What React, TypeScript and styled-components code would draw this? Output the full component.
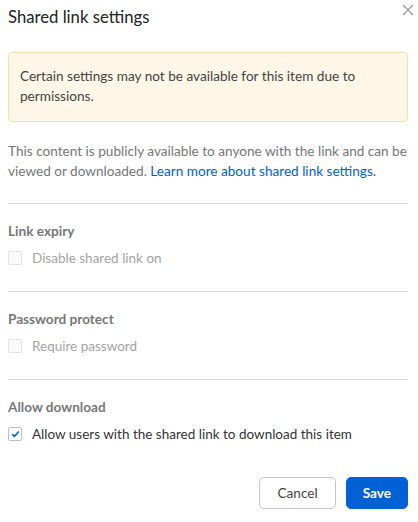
import React from 'react';
import styled, { createGlobalStyle } from 'styled-components';

const GlobalStyle = createGlobalStyle`
  html, body {
    margin: 0;
    padding: 0;
    background: #fff;
  }
  body {
    font-family: Lato, "Liberation Sans", sans-serif;
    -webkit-font-smoothing: antialiased;
  }
`;

const Modal = styled.div`
  width: 418px;
  height: 522px;
  box-sizing: border-box;
  padding: 7px 10px 0 8px;
  position: relative;
`;

const Title = styled.h2`
  margin: 0;
  font-size: 16.7px;
  line-height: 20px;
  font-weight: 400;
  color: #222;
`;

const CloseButton = styled.button`
  position: absolute;
  top: 3px;
  right: 4px;
  width: 13px;
  height: 13px;
  padding: 0;
  border: 0;
  background: none;
  display: flex;
  align-items: center;
  justify-content: center;
  cursor: pointer;
`;

const Notice = styled.div`
  margin-top: 25px;
  padding: 13px 11px 15px;
  background: #fef7e7;
  border: 1px solid #f7e0a3;
  border-radius: 4px;
  font-size: 13.6px;
  line-height: 20px;
  color: #444;
`;

const Description = styled.p`
  margin: 19px 0 0;
  font-size: 13.6px;
  line-height: 20px;
  color: #767676;
  padding-bottom: 22px;
`;

const LearnMore = styled.a`
  color: #0061d5;
  text-decoration: none;
`;

const Section = styled.section<{ $last?: boolean }>`
  border-top: 1px solid #d9d9d9;
  padding: 17px 0 ${(p) => (p.$last ? '33px' : '23px')};
`;

const SectionLabel = styled.div`
  font-size: 13.6px;
  line-height: 20px;
  font-weight: 700;
  color: #777;
`;

const CheckRow = styled.label<{ $disabled?: boolean }>`
  margin-top: 7px;
  display: flex;
  align-items: center;
  gap: 10px;
  font-size: 13.5px;
  line-height: 20px;
  color: ${(p) => (p.$disabled ? '#a3a3a3' : '#333')};
`;

const Box = styled.span<{ $disabled?: boolean }>`
  width: 14px;
  height: 14px;
  box-sizing: border-box;
  border-radius: 2px;
  border: 1px solid ${(p) => (p.$disabled ? '#e2e2e2' : '#bdbdbd')};
  background: ${(p) => (p.$disabled ? '#fafafa' : '#fff')};
  display: flex;
  align-items: center;
  justify-content: center;
  flex: none;
`;

const Footer = styled.div`
  display: flex;
  justify-content: flex-end;
  gap: 10px;
`;

const Button = styled.button<{ $primary?: boolean }>`
  height: 32px;
  box-sizing: border-box;
  padding: 0 ${(p) => (p.$primary ? '16px' : '17px')};
  border-radius: 5px;
  font-family: Lato, "Liberation Sans", sans-serif;
  font-size: 13.6px;
  font-weight: ${(p) => (p.$primary ? 700 : 400)};
  color: ${(p) => (p.$primary ? '#fff' : '#444')};
  background: ${(p) => (p.$primary ? '#0061d5' : '#fff')};
  border: 1px solid ${(p) => (p.$primary ? '#0061d5' : '#c4c4c4')};
  cursor: pointer;
`;

function Checkbox({ checked, disabled, children }: { checked?: boolean; disabled?: boolean; children: React.ReactNode }) {
  return (
    <CheckRow $disabled={disabled}>
      <Box $disabled={disabled}>
        {checked && (
          <svg width="9" height="8" viewBox="0 0 9 8">
            <path d="M1.2 4.2 L3.5 6.3 L7.8 1.5" fill="none" stroke="#0061d5" strokeWidth="1.6" />
          </svg>
        )}
      </Box>
      {children}
    </CheckRow>
  );
}

export default function App() {
  return (
    <>
      <GlobalStyle />
      <Modal>
        <Title>Shared link settings</Title>
        <CloseButton aria-label="Close">
          <svg width="12" height="12" viewBox="0 0 12 12">
            <path d="M1 1 L11 11 M11 1 L1 11" stroke="#999" strokeWidth="1.3" />
          </svg>
        </CloseButton>
        <Notice>Certain settings may not be available for this item due to permissions.</Notice>
        <Description>
          This content is publicly available to anyone with the link and can be viewed or downloaded.{' '}
          <LearnMore href="#">Learn more about shared link settings.</LearnMore>
        </Description>
        <Section>
          <SectionLabel>Link expiry</SectionLabel>
          <Checkbox disabled>Disable shared link on</Checkbox>
        </Section>
        <Section>
          <SectionLabel>Password protect</SectionLabel>
          <Checkbox disabled>Require password</Checkbox>
        </Section>
        <Section $last>
          <SectionLabel>Allow download</SectionLabel>
          <Checkbox checked>Allow users with the shared link to download this item</Checkbox>
        </Section>
        <Footer>
          <Button>Cancel</Button>
          <Button $primary>Save</Button>
        </Footer>
      </Modal>
    </>
  );
}
